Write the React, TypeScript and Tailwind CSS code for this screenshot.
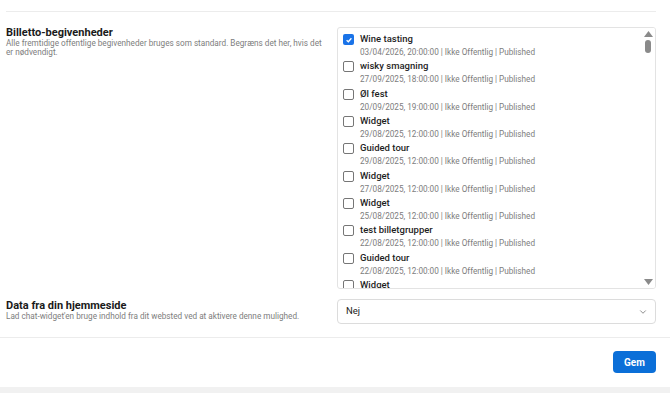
import { ChevronDown } from "lucide-react";

type Event = {
  title: string;
  date: string;
  checked?: boolean;
};

const events: Event[] = [
  { title: "Wine tasting", date: "03/04/2026, 20:00:00", checked: true },
  { title: "wisky smagning", date: "27/09/2025, 18:00:00" },
  { title: "Øl fest", date: "20/09/2025, 19:00:00" },
  { title: "Widget", date: "29/08/2025, 12:00:00" },
  { title: "Guided tour", date: "29/08/2025, 12:00:00" },
  { title: "Widget", date: "27/08/2025, 12:00:00" },
  { title: "Widget", date: "25/08/2025, 12:00:00" },
  { title: "test billetgrupper", date: "22/08/2025, 12:00:00" },
  { title: "Guided tour", date: "22/08/2025, 12:00:00" },
  { title: "Widget", date: "20/08/2025, 12:00:00" },
];

function Checkbox({ checked }: { checked?: boolean }) {
  if (checked) {
    return (
      <span className="mt-[2px] flex h-[11px] w-[11px] shrink-0 items-center justify-center rounded-[2px] bg-[#1a73e8]">
        <svg width="8" height="8" viewBox="0 0 10 10">
          <path d="M2 5.2 L4.2 7.2 L8 2.8" fill="none" stroke="white" strokeWidth="1.6" />
        </svg>
      </span>
    );
  }
  return <span className="mt-[2px] h-[11px] w-[11px] shrink-0 rounded-[2px] border border-[#767676] bg-white" />;
}

export default function App() {
  return (
    <div
      className="h-[393px] w-[670px] overflow-hidden bg-white text-[#1f1f1f]"
      style={{ fontFamily: "Roboto, 'Noto Sans', sans-serif" }}
    >
      <div className="px-[6px] pr-[14px] pt-[11px]">
        <div className="border-t border-[#ececec]" />

        <div className="mt-[15px] grid grid-cols-2 gap-x-3 gap-y-[10px]">
          <div className="-mt-[1px]">
            <h3 className="text-[11px] font-bold leading-[13px] text-[#1a1a1a]">Billetto-begivenheder</h3>
            <p className="text-[8.2px] leading-[9px] text-[#7d7d7d]">
              Alle fremtidige offentlige begivenheder bruges som standard. Begræns det her, hvis det er nødvendigt.
            </p>
          </div>

          <div className="flex h-[262px] overflow-hidden rounded-[3px] border border-[#e3e3e3]">
            <div className="flex-1 overflow-hidden pl-[5px] pt-[4px]">
              {events.map((e, i) => (
                <div key={i} className="flex gap-[6px]">
                  <Checkbox checked={e.checked} />
                  <div>
                    <div className="text-[9.5px] font-medium leading-[14px] text-[#1f1f1f]">{e.title}</div>
                    <div className="text-[8.2px] leading-[13.33px] text-[#7d7d7d]">
                      {e.date} | Ikke Offentlig | Published
                    </div>
                  </div>
                </div>
              ))}
            </div>
            <div className="flex w-[14px] flex-col items-center justify-between bg-white py-[3px]">
              <div className="flex flex-col items-center gap-[3px]">
                <svg width="9" height="6" viewBox="0 0 9 6">
                  <path d="M4.5 0 L9 6 L0 6 Z" fill="#8a8a8a" />
                </svg>
                <div className="h-[13px] w-[6px] rounded-full bg-[#8a8a8a]" />
              </div>
              <svg width="9" height="6" viewBox="0 0 9 6">
                <path d="M0 0 L9 0 L4.5 6 Z" fill="#8a8a8a" />
              </svg>
            </div>
          </div>

          <div>
            <h3 className="text-[11px] font-bold leading-[13px] text-[#1a1a1a]">Data fra din hjemmeside</h3>
            <p className="text-[8.2px] leading-[9px] text-[#7d7d7d]">
              Lad chat-widget'en bruge indhold fra dit websted ved at aktivere denne mulighed.
            </p>
          </div>

          <div className="flex h-[25px] items-center justify-between rounded-[4px] border border-[#dcdcdc] pl-[8px] pr-[7px]">
            <span className="text-[9.5px] text-[#222]">Nej</span>
            <ChevronDown size={10} strokeWidth={1.6} className="text-[#555]" />
          </div>
        </div>
      </div>

      <div className="mt-[13px] border-t border-[#ececec]" />

      <div className="flex justify-end px-[14px] pt-[13px]">
        <button className="h-[22px] w-[43px] rounded-[4px] bg-[#0b6fd8] text-[10px] font-bold text-white">Gem</button>
      </div>

      <div className="mt-[14px] h-[6px] bg-[#f1f1f1]" />
    </div>
  );
}
